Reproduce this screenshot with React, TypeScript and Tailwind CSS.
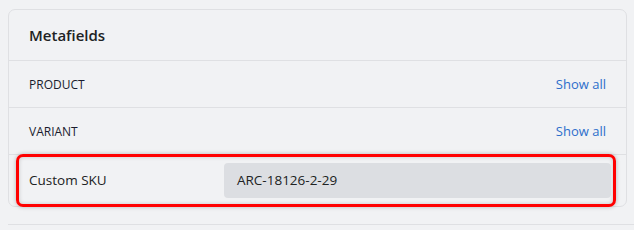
export default function App() {
  return (
    <div
      className="w-[634px] h-[230px] bg-[#f1f2f4] pt-[9px] pl-2 overflow-hidden"
      style={{ fontFamily: '"Segoe UI", "Open Sans", "Noto Sans", sans-serif' }}
    >
      {/* Card */}
      <div className="w-[619px] rounded-[7px] border border-[#dfe0e3]">
        <div className="h-[51px] flex items-center px-5 border-b border-[#dfe0e3]">
          <h2 className="text-[15px] font-semibold text-[#202223]">Metafields</h2>
        </div>

        <div className="h-[47px] flex items-center justify-between px-5 border-b border-[#dfe0e3]">
          <span className="text-[12px] font-medium text-[#1a1c2e] pt-px">PRODUCT</span>
          <a className="text-[13px] text-[#2c6ecb] pt-px">Show all</a>
        </div>

        <div className="h-[47px] flex items-center justify-between px-5 border-b border-[#dfe0e3]">
          <span className="text-[12px] font-medium text-[#1a1c2e] pt-px">VARIANT</span>
          <a className="text-[13px] text-[#2c6ecb] pt-px">Show all</a>
        </div>

        {/* Highlighted row */}
        <div className="h-[52px] pl-[7px] pr-[10px]">
          <div className="h-[53px] -mt-px flex items-center pl-[10px] pr-[2px] border-[3px] border-[#ff0000] rounded-[7px] shadow-[inset_0_0_4px_rgba(0,0,0,0.18),0_0_4px_rgba(0,0,0,0.25)]">
            <span className="w-[195px] text-[13.5px] text-[#202223]">Custom SKU</span>
            <div className="flex-1 h-[35px] flex items-center px-[13px] rounded-[4px] bg-[#dcdee2] text-[13.5px] text-[#202223]">
              ARC-18126-2-29
            </div>
          </div>
        </div>
      </div>

      <div className="mt-[17px] border-t border-[#dfe0e3]" />
    </div>
  );
}
